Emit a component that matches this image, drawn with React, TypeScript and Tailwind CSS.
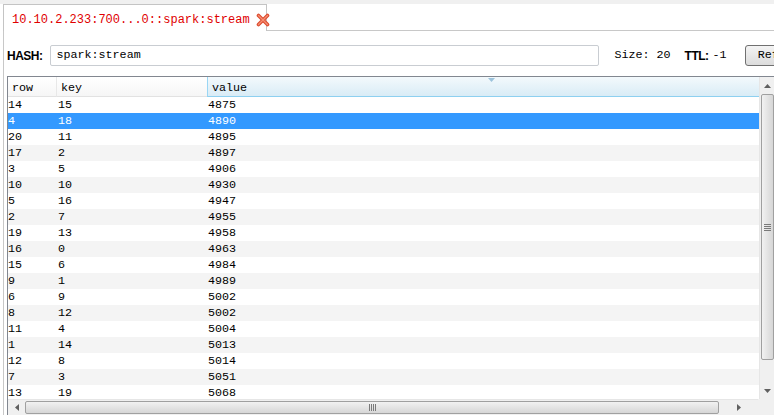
import React from "react";

const rows: [string, string, string][] = [
  ["14", "15", "4875"],
  ["4", "18", "4890"],
  ["20", "11", "4895"],
  ["17", "2", "4897"],
  ["3", "5", "4906"],
  ["10", "10", "4930"],
  ["5", "16", "4947"],
  ["2", "7", "4955"],
  ["19", "13", "4958"],
  ["16", "0", "4963"],
  ["15", "6", "4984"],
  ["9", "1", "4989"],
  ["6", "9", "5002"],
  ["8", "12", "5002"],
  ["11", "4", "5004"],
  ["1", "14", "5013"],
  ["12", "8", "5014"],
  ["7", "3", "5051"],
  ["13", "19", "5068"],
];

const SELECTED = 1;

function CloseIcon() {
  return (
    <svg width="14" height="14" viewBox="0 0 14 14" className="shrink-0">
      <g strokeLinecap="round">
        <path d="M2.5 2.5 L11.5 11.5 M11.5 2.5 L2.5 11.5" stroke="#dc4a2e" strokeWidth="3.6" />
        <path d="M2.5 2.5 L11.5 11.5 M11.5 2.5 L2.5 11.5" stroke="#f59073" strokeWidth="1.4" />
      </g>
    </svg>
  );
}

function VScrollbar() {
  return (
    <div className="w-[16px] shrink-0 flex flex-col bg-[#f0f0f0] border-l border-[#e6e6e6]">
      <div className="h-[17px] flex items-center justify-center">
        <svg width="7" height="4" viewBox="0 0 7 4">
          <path d="M0 4 L3.5 0 L7 4 Z" fill="#606060" />
        </svg>
      </div>
      <div className="h-[266px] mx-[1px] rounded-[2px] border border-[#a0a0a0] bg-gradient-to-r from-[#f2f2f2] to-[#d6d6d6] flex items-center justify-center">
        <div className="flex flex-col gap-[1px]">
          <div className="w-[7px] h-[1px] bg-[#7a7a7a]" />
          <div className="w-[7px] h-[1px] bg-[#7a7a7a]" />
          <div className="w-[7px] h-[1px] bg-[#7a7a7a]" />
          <div className="w-[7px] h-[1px] bg-[#7a7a7a]" />
        </div>
      </div>
      <div className="flex-1" />
      <div className="h-[17px] flex items-center justify-center">
        <svg width="7" height="4" viewBox="0 0 7 4">
          <path d="M0 0 L3.5 4 L7 0 Z" fill="#606060" />
        </svg>
      </div>
    </div>
  );
}

function HScrollbar() {
  return (
    <div className="h-[16px] flex bg-[#f0f0f0] border-t border-[#e6e6e6]">
      <div className="w-[17px] flex items-center justify-center">
        <svg width="4" height="7" viewBox="0 0 4 7">
          <path d="M4 0 L0 3.5 L4 7 Z" fill="#606060" />
        </svg>
      </div>
      <div className="w-[694px] my-[1px] rounded-[2px] border border-[#a0a0a0] bg-gradient-to-b from-[#f2f2f2] to-[#d6d6d6] flex items-center justify-center">
        <div className="flex gap-[1px]">
          <div className="w-[1px] h-[7px] bg-[#7a7a7a]" />
          <div className="w-[1px] h-[7px] bg-[#7a7a7a]" />
          <div className="w-[1px] h-[7px] bg-[#7a7a7a]" />
          <div className="w-[1px] h-[7px] bg-[#7a7a7a]" />
        </div>
      </div>
      <div className="flex-1 flex items-center justify-center">
        <svg width="4" height="7" viewBox="0 0 4 7">
          <path d="M0 0 L4 3.5 L0 7 Z" fill="#606060" />
        </svg>
      </div>
    </div>
  );
}

export default function App() {
  return (
    <div className="w-[774px] h-[415px] overflow-hidden bg-white flex flex-col font-['Liberation_Mono',monospace] text-[11.7px] text-black">
      <div className="h-[4px] bg-[#f0f0f0] shrink-0" />
      {/* tab strip */}
      <div className="h-[27px] flex shrink-0">
        <div className="ml-[3px] w-[264px] shrink-0 border border-b-0 border-[#c4c4c4] bg-white flex items-center pt-[3px] pl-[8px] gap-[6px]">
          <span className="text-[#e00000] text-[12px] leading-none whitespace-nowrap">10.10.2.233:700...0::spark:stream</span>
          <CloseIcon />
        </div>
        <div className="flex-1 border-b border-[#c8c8c8]" />
      </div>

      <div className="flex-1 min-h-0 ml-[3px] border-l border-[#c8c8c8] flex flex-col">
        {/* toolbar */}
        <div className="mt-[14px] h-[21px] flex items-center pl-[3px] shrink-0 whitespace-nowrap">
          <span className="shrink-0 font-['Liberation_Sans',sans-serif] font-bold text-[12px] tracking-[-0.5px]">HASH:</span>
          <div className="shrink-0 ml-[7px] w-[549px] h-[21px] border border-[#c9cdd2] rounded-[2px] flex items-center pl-[6px]">
            spark:stream
          </div>
          <span className="shrink-0 ml-[16px]">Size: 20</span>
          <span className="shrink-0 ml-[14px] font-['Liberation_Sans',sans-serif] font-bold text-[12px] tracking-[-0.5px]">TTL:</span>
          <span className="shrink-0 ml-[4px]">-1</span>
          <div className="ml-[18px] w-[60px] h-[21px] shrink-0 border border-[#707070] rounded-[3px] bg-gradient-to-b from-[#f4f4f4] to-[#dcdcdc] flex items-center pl-[12px]">
            Refresh
          </div>
        </div>

        {/* table */}
        <div className="mt-[10px] ml-[3px] w-[768px] shrink-0 flex-1 min-h-0 border-t border-l border-[#828790] flex flex-col">
          <div className="flex-1 min-h-0 flex">
            <div className="flex-1 min-w-0 flex flex-col overflow-hidden">
              <div className="h-[20px] flex shrink-0 leading-[16px]">
                <div className="w-[49px] pt-[3px] pl-[4px] bg-gradient-to-b from-white to-[#f6f6f6] border-b border-[#e2e2e2] border-r border-r-[#e8e8e8]">row</div>
                <div className="w-[150px] pt-[3px] pl-[4px] bg-gradient-to-b from-white to-[#f6f6f6] border-b border-[#e2e2e2]">key</div>
                <div className="flex-1 pt-[3px] relative pl-[4px] bg-gradient-to-b from-[#f3f9fc] to-[#d9ecf6] border-l border-[#9ad6f4] border-b border-b-[#8ed0f0]">
                  value
                  <svg className="absolute left-[280px] top-[1px]" width="7" height="4" viewBox="0 0 7 4">
                    <path d="M0 0 L7 0 L3.5 4 Z" fill="#9cc3dc" />
                  </svg>
                </div>
              </div>
              {rows.map((r, i) => {
                const bg = i === SELECTED ? "bg-[#3399ff] text-white" : i % 2 === 1 ? "bg-[#f4f4f4]" : "bg-white";
                return (
                  <div key={i} className={`h-[16px] shrink-0 flex leading-[16px] ${bg}`}>
                    <div className="w-[49px]">{r[0]}</div>
                    <div className="w-[150px] pl-[1px]">{r[1]}</div>
                    <div className="flex-1 pl-[1px]">{r[2]}</div>
                  </div>
                );
              })}
            </div>
            <VScrollbar />
          </div>
          <div className="flex shrink-0">
            <div className="w-[750px]">
              <HScrollbar />
            </div>
            <div className="w-[16px] h-[16px] bg-[#f0f0f0]" />
          </div>
        </div>
      </div>
    </div>
  );
}
